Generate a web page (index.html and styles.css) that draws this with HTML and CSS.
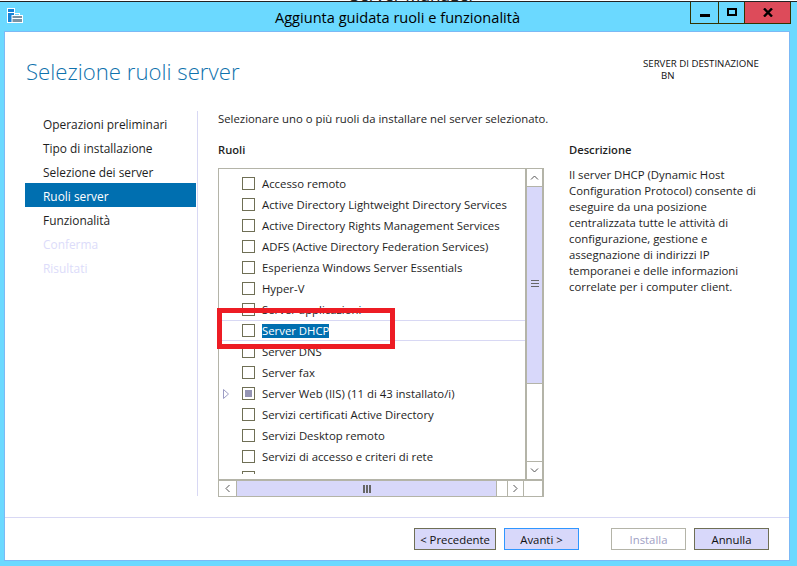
FILE: index.html
```html
<!DOCTYPE html>
<html lang="it">
<head>
<meta charset="utf-8">
<title>Aggiunta guidata ruoli e funzionalità</title>
<link rel="stylesheet" href="styles.css">
</head>
<body>
<div class="strip"><span>Server Manager</span></div>
<div class="window">
  <header class="titlebar">
    <svg class="app-icon" width="16" height="16" viewBox="0 0 16 16">
      <rect x="0.5" y="0.5" width="7" height="14" fill="#1683d8" stroke="#fff" stroke-width="1"/>
      <rect x="1" y="4" width="6" height="1" fill="#fff"/>
      <rect x="5" y="7.5" width="10.5" height="7" fill="#7b93a3" stroke="#fff"/>
      <rect x="8" y="5.5" width="4.5" height="2" fill="none" stroke="#fff"/>
      <rect x="5" y="10" width="10" height="1" fill="#fff"/>
    </svg>
    <div class="title">Aggiunta guidata ruoli e funzionalità</div>
    <div class="caption">
      <div class="cap cap-min"><span class="glyph-min"></span></div>
      <div class="cap cap-max"><span class="glyph-max"></span></div>
      <div class="cap cap-close">
        <svg width="10" height="9" viewBox="0 0 10 9"><path d="M1 0.5 L9 8.5 M9 0.5 L1 8.5" stroke="#000" stroke-width="2.4" fill="none"/></svg>
      </div>
    </div>
  </header>
  <main class="client">
    <div class="head">
      <h1>Selezione ruoli server</h1>
      <div class="dest"><div>SERVER DI DESTINAZIONE</div><div class="dest-name">BN</div></div>
    </div>
    <div class="body">
      <nav class="steps">
        <div class="step">Operazioni preliminari</div>
        <div class="step">Tipo di installazione</div>
        <div class="step">Selezione dei server</div>
        <div class="step active">Ruoli server</div>
        <div class="step">Funzionalità</div>
        <div class="step off">Conferma</div>
        <div class="step off">Risultati</div>
      </nav>
      <section class="content">
        <p class="intro">Selezionare uno o più ruoli da installare nel server selezionato.</p>
        <div class="columns">
          <div class="roles">
            <h2>Ruoli</h2>
            <div class="listbox">
              <div class="list-main">
                <div class="list">
                  <div class="row"><span class="chk"></span><span>Accesso remoto</span></div>
                  <div class="row"><span class="chk"></span><span>Active Directory Lightweight Directory Services</span></div>
                  <div class="row"><span class="chk"></span><span>Active Directory Rights Management Services</span></div>
                  <div class="row"><span class="chk"></span><span>ADFS (Active Directory Federation Services)</span></div>
                  <div class="row"><span class="chk"></span><span>Esperienza Windows Server Essentials</span></div>
                  <div class="row"><span class="chk"></span><span>Hyper-V</span></div>
                  <div class="row"><span class="chk"></span><span>Server applicazioni</span></div>
                  <div class="row selected"><span class="chk"></span><span class="sel-text">Server DHCP</span></div>
                  <div class="row"><span class="chk"></span><span>Server DNS</span></div>
                  <div class="row"><span class="chk"></span><span>Server fax</span></div>
                  <div class="row"><svg class="expander" width="6" height="10" viewBox="0 0 6 10"><path d="M0.5 0.5 L5.5 5 L0.5 9.5 Z" fill="#fff" stroke="#9c9cc4"/></svg><span class="chk partial"></span><span>Server Web (IIS) (11 di 43 installato/i)</span></div>
                  <div class="row"><span class="chk"></span><span>Servizi certificati Active Directory</span></div>
                  <div class="row"><span class="chk"></span><span>Servizi Desktop remoto</span></div>
                  <div class="row"><span class="chk"></span><span>Servizi di accesso e criteri di rete</span></div>
                  <div class="row"><span class="chk"></span><span>Servizi di attivazione contratti multipli</span></div>
                </div>
                <div class="vscroll">
                  <div class="sbtn"><svg width="9" height="5" viewBox="0 0 9 5"><path d="M1 4.5 L4.5 1 L8 4.5" fill="none" stroke="#555"/></svg></div>
                  <div class="vthumb"><span class="grip-h"></span></div>
                  <div class="vtrack"></div>
                  <div class="sbtn sbtn-bottom"><svg width="9" height="5" viewBox="0 0 9 5"><path d="M1 0.5 L4.5 4 L8 0.5" fill="none" stroke="#555"/></svg></div>
                </div>
              </div>
              <div class="hscroll">
                <div class="hbtn"><svg width="5" height="9" viewBox="0 0 5 9"><path d="M4.5 1 L1 4.5 L4.5 8" fill="none" stroke="#555"/></svg></div>
                <div class="hthumb"><span class="grip-v"></span></div>
                <div class="htrack"></div>
                <div class="hbtn hbtn-right"><svg width="5" height="9" viewBox="0 0 5 9"><path d="M0.5 1 L4 4.5 L0.5 8" fill="none" stroke="#555"/></svg></div>
                <div class="corner"></div>
              </div>
            </div>
          </div>
          <aside class="desc">
            <h2>Descrizione</h2>
            <p>Il server DHCP (Dynamic Host Configuration Protocol) consente di eseguire da una posizione centralizzata tutte le attività di configurazione, gestione e assegnazione di indirizzi IP temporanei e delle informazioni correlate per i computer client.</p>
          </aside>
        </div>
      </section>
    </div>
    <footer class="footer">
      <button class="btn w-prev">&lt; Precedente</button>
      <button class="btn w-next focus">Avanti &gt;</button>
      <button class="btn w-inst disabled">Installa</button>
      <button class="btn w-inst">Annulla</button>
    </footer>
  </main>
</div>
<div class="annot"></div>
</body>
</html>
```
FILE: styles.css
```css
* { box-sizing: border-box; margin: 0; padding: 0; }
html, body { width: 797px; height: 566px; overflow: hidden; }
body { position: relative; background: #6bd9ff; font-family: "Open Sans", "Noto Sans", sans-serif; font-size: 11.35px; color: #1e1e1e; display: flex; flex-direction: column; }
.strip { height: 1px; background: #fff; overflow: hidden; text-align: center; flex: none; position: relative; }
.strip span { position: absolute; left: 350px; bottom: -4px; font-size: 17px; line-height: 20px; color: #222; white-space: nowrap; }
.window { width: 797px; flex: 1; min-height: 0; border-top: 1px solid #222; display: flex; flex-direction: column; }
.titlebar { height: 30px; display: flex; position: relative; flex: none; }
.app-icon { margin: 6px 0 0 7px; }
.title { position: absolute; left: 0; right: 0; top: 5px; text-align: center; font-size: 14.6px; line-height: 20px; color: #000; padding-right: 2px; }
.caption { position: absolute; top: 0; left: 690px; height: 22px; display: flex; border: 1px solid #333300; border-top: 0; }
.cap { height: 21px; display: flex; align-items: center; justify-content: center; }
.cap-min { width: 28px; border-right: 1px solid #333300; }
.cap-max { width: 26px; border-right: 1px solid #333300; }
.cap-close { width: 45px; background: #dd4b5a; }
.glyph-min { width: 10px; height: 3px; background: #000; margin-top: 6px; }
.glyph-max { width: 10px; height: 8px; border: 2px solid #000; margin-top: -2px; }
.client { margin: 0 8px 6px 5px; background: #fff; box-shadow: 0 0 0 1px #7cb9f5; flex: 1; display: flex; flex-direction: column; min-height: 0; }
.head { height: 79px; display: flex; justify-content: space-between; padding-left: 21px; flex: none; }
h1 { font-weight: 300; font-size: 22.2px; line-height: 30px; margin-top: 25px; color: #0f72ad; }
.dest { width: 120px; margin: 25px 26px 0 0; font-size: 9.67px; line-height: 14px; color: #111; white-space: nowrap; }
.dest-name { padding-left: 18px; margin-top: -2px; }
.body { flex: 1; display: flex; min-height: 0; }
.steps { width: 171px; margin-left: 20px; flex: none; font-size: 11.9px; }
.step { height: 24px; line-height: 24px; padding: 1px 0 0 18px; white-space: nowrap; overflow: hidden; }
.step.active { background: #006fb0; color: #fff; }
.step.off { color: #dcdcfa; }
.content { margin-left: 1px; border-left: 1px solid #d8d8f4; height: 385px; padding-left: 20px; flex: 1; }
.intro { line-height: 16px; }
.columns { display: flex; margin-top: 15px; }
h2 { font-size: 11.2px; font-weight: 600; line-height: 16px; }
.roles { width: 351px; flex: none; }
.listbox { margin-top: 10px; width: 326px; height: 329px; border: 1px solid #b4b4a8; border-right-width: 2px; display: flex; flex-direction: column; }
.list-main { flex: 1; display: flex; min-height: 0; }
.list { flex: 1; height: 305px; overflow: hidden; padding-top: 4px; }
.row { height: 21px; display: flex; align-items: center; padding-left: 23px; position: relative; white-space: nowrap; }
.row.selected { box-shadow: 0 -1px 0 #d8d8f4 inset, 0 1px 0 #d8d8f4 inset; }
.sel-text { background: #006fb0; color: #fff; line-height: 14px; }
.chk { width: 13px; height: 13px; border: 1px solid #6f6f55; margin-right: 7px; flex: none; background: #fff; }
.chk.partial { padding: 2px; }
.chk.partial::before { content: ""; display: block; width: 7px; height: 7px; background: #9494b4; }
.expander { position: absolute; left: 4px; top: 6px; }
.vscroll { width: 17px; border-left: 2px solid #b4b4a8; display: flex; flex-direction: column; flex: none; }
.sbtn { height: 18px; display: flex; align-items: center; justify-content: center; flex: none; border-bottom: 1px solid #b4b4a8; background: #fff; }
.sbtn-bottom { border-bottom: 0; border-top: 1px solid #b4b4a8; }
.vthumb { height: 197px; background: #d8d8fa; border-bottom: 1px solid #b4b4a8; display: flex; align-items: center; justify-content: center; flex: none; }
.vtrack { flex: 1; }
.grip-h { width: 8px; height: 8px; margin-bottom: 2px; background: repeating-linear-gradient(to bottom, #666 0 1px, #d8d8fa 1px 3px); }
.grip-v { width: 8px; height: 8px; margin-left: 1px; background: repeating-linear-gradient(to right, #666 0 2px, #d8d8fa 2px 3px); }
.hscroll { height: 17px; display: flex; border-top: 2px solid #b4b4a8; flex: none; }
.hbtn { width: 18px; display: flex; align-items: center; justify-content: center; border-right: 1px solid #b4b4a8; flex: none; }
.hbtn-right { border-left: 1px solid #b4b4a8; width: 17px; }
.hthumb { width: 260px; background: #d8d8fa; border-right: 1px solid #b4b4a8; display: flex; align-items: center; justify-content: center; flex: none; }
.htrack { flex: 1; }
.corner { width: 18px; flex: none; }
.desc { width: 195px; flex: none; }
.desc p { margin-top: 9px; line-height: 16px; }
.footer { height: 43px; border-top: 1px solid #d8d8f4; display: flex; padding: 10px 0 0 409px; flex: none; margin-top: auto; }
.btn { height: 22px; font: inherit; color: #111; background: #d8d8fa; border: 1px solid #6f6f55; }
.w-prev { width: 82px; margin-right: 8px; }
.w-next { width: 75px; border-color: #2f96ff; margin-right: 32px; }
.w-inst { width: 75px; margin-right: 8px; }
.disabled { background: #fff; color: #a0a0c4; border-color: #b4b4a8; }
.annot { position: absolute; left: 217px; top: 308px; width: 178px; height: 41px; border: 5px solid #ed1c24; pointer-events: none; }
```
